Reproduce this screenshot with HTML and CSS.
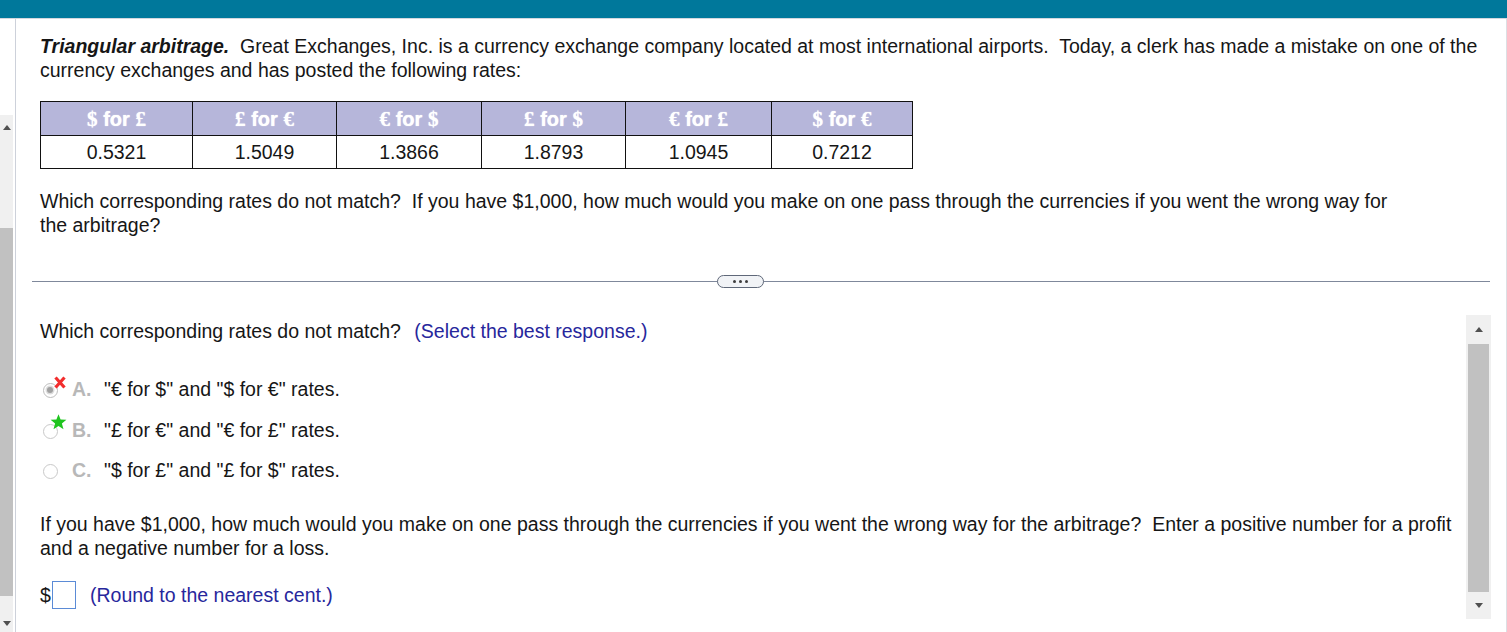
FILE: index.html
```html
<!DOCTYPE html>
<html lang="en">
<head>
<meta charset="utf-8">
<title>Triangular arbitrage</title>
<link rel="stylesheet" href="styles.css">
</head>
<body>
<div class="topbar"></div>
<div class="frame">
  <div class="lgutter">
    <div class="track ltrack">
      <div class="arrowbox"><span class="tri up"></span></div>
      <div class="thumb lthumb"></div>
      <div class="arrowbox ldown"><span class="tri down"></span></div>
    </div>
  </div>
  <div class="main">
    <div class="stem">
      <p class="intro"><span class="title">Triangular arbitrage.</span>&nbsp; Great Exchanges, Inc. is a currency exchange company located at most international airports.&nbsp; Today, a clerk has made a mistake on one of the currency exchanges and has posted the following rates:</p>
      <table class="rates">
        <colgroup>
          <col class="c1"><col class="c2"><col class="c3"><col class="c4"><col class="c5"><col class="c6">
        </colgroup>
        <thead>
          <tr>
            <th><span class="sym">$</span> for <span class="sym">£</span></th>
            <th><span class="sym">£</span> for <span class="sym">€</span></th>
            <th><span class="sym">€</span> for <span class="sym">$</span></th>
            <th><span class="sym">£</span> for <span class="sym">$</span></th>
            <th><span class="sym">€</span> for <span class="sym">£</span></th>
            <th><span class="sym">$</span> for <span class="sym">€</span></th>
          </tr>
        </thead>
        <tbody>
          <tr><td>0.5321</td><td>1.5049</td><td>1.3866</td><td>1.8793</td><td>1.0945</td><td>0.7212</td></tr>
        </tbody>
      </table>
      <p class="question">Which corresponding rates do not match?&nbsp; If you have $1,000, how much would you make on one pass through the currencies if you went the wrong way for the arbitrage?</p>
    </div>
    <div class="divider"><span class="pill"><i></i><i></i><i></i></span></div>
    <div class="lower">
      <div class="answers">
        <p class="prompt">Which corresponding rates do not match? <span class="hint">(Select the best response.)</span></p>
        <ul class="options">
          <li class="opt">
            <span class="radio checked"><span class="mark cross"><svg width="12" height="13" viewBox="0 0 12 13"><path d="M1.5 1.5 L10.5 11.5 M10.5 1.5 L1.5 11.5" stroke="#f22d2d" stroke-width="3.2" stroke-linecap="butt" fill="none"/></svg></span></span>
            <span class="letter">A.</span>
            <span class="otext">"€ for $" and "$ for €" rates.</span>
          </li>
          <li class="opt">
            <span class="radio"><span class="mark star"><svg width="17" height="16" viewBox="0 0 17 16"><path d="M8.5 0.3 L10.6 5.6 L16.4 5.8 L11.9 9.4 L13.5 15.2 L8.5 11.9 L3.5 15.2 L5.1 9.4 L0.6 5.8 L6.4 5.6 Z" fill="#1fc41f"/></svg></span></span>
            <span class="letter">B.</span>
            <span class="otext">"£ for €" and "€ for £" rates.</span>
          </li>
          <li class="opt">
            <span class="radio"></span>
            <span class="letter">C.</span>
            <span class="otext">"$ for £" and "£ for $" rates.</span>
          </li>
        </ul>
        <p class="para">If you have $1,000, how much would you make on one pass through the currencies if you went the wrong way for the arbitrage?&nbsp; Enter a positive number for a profit and a negative number for a loss.</p>
        <div class="entry">
          <span class="dollar">$</span><span class="inputbox"></span>
          <span class="hint round">(Round to the nearest cent.)</span>
        </div>
      </div>
      <div class="track rtrack">
        <div class="arrowbox rup"><span class="tri up"></span></div>
        <div class="thumb rthumb"></div>
        <div class="arrowbox rdown"><span class="tri down"></span></div>
      </div>
    </div>
  </div>
  <div class="redge"></div>
</div>
</body>
</html>
```

FILE: styles.css
```css
* { box-sizing: border-box; }
html, body { margin: 0; padding: 0; }
body {
  width: 1507px;
  height: 632px;
  overflow: hidden;
  background: #ffffff;
  font-family: "Liberation Sans", Arial, sans-serif;
  font-size: 19.5px;
  line-height: 24px;
  color: #161616;
}
p { margin: 0; }

.topbar {
  height: 19px;
  background: #00789b;
  border-bottom: 1px solid #d3d7de;
}

.frame {
  display: flex;
  height: 613px;
}

/* left gutter with cropped scrollbar */
.lgutter {
  width: 16px;
  flex: none;
  border-right: 1px solid #cdd1da;
  display: flex;
  flex-direction: column;
}
.track {
  background: #f0f0f0;
  display: flex;
  flex-direction: column;
  align-items: center;
}
.ltrack {
  width: 13px;
  margin-top: 96px;
  flex: 1;
}
.arrowbox {
  height: 24px;
  width: 100%;
  display: flex;
  align-items: center;
  justify-content: center;
  flex: none;
}
.tri {
  width: 0;
  height: 0;
  border-left: 4.5px solid transparent;
  border-right: 4.5px solid transparent;
}
.tri.up { border-bottom: 5px solid #505050; }
.tri.down { border-top: 5px solid #505050; }
.thumb { background: #c1c1c1; flex: none; }
.lthumb {
  width: 13px;
  height: 368px;
  margin-top: 89px;
  align-self: flex-start;
}
.ldown { margin-top: 15px; }

/* main column */
.main {
  width: 1475px;
  flex: none;
  display: flex;
  flex-direction: column;
}
.stem { padding: 15px 0 0 24px; }
.title { font-weight: bold; font-style: italic; }

.rates {
  border-collapse: collapse;
  margin-top: 19px;
  table-layout: fixed;
  width: 872px;
}
.c1 { width: 152px; }
.c2 { width: 144px; }
.c3 { width: 145px; }
.c4 { width: 144px; }
.c5 { width: 146px; }
.c6 { width: 141px; }
.rates th, .rates td {
  border: 1px solid #111111;
  text-align: center;
  padding: 0;
}
.rates th {
  height: 34px;
  background: #b6b6da;
  color: #ffffff;
  font-weight: bold;
  font-size: 20px;
  text-shadow: 0 0 1px #ffffff;
}
.rates th .sym { font-family: "Liberation Serif", "Times New Roman", serif; font-size: 21px; }
.rates td {
  height: 33px;
  font-size: 19.5px;
}

.question {
  margin-top: 20px;
  max-width: 1365px;
}

.divider {
  margin: 38px 0 0 16px;
  width: 1458px;
  height: 13px;
  display: flex;
  align-items: center;
  justify-content: center;
  background: linear-gradient(#7f889b, #7f889b) 0 6px / 100% 1px no-repeat;
}
.pill {
  width: 47px;
  height: 13px;
  border: 1px solid #5f6879;
  border-radius: 7px;
  background: #f1f3f6;
  display: flex;
  align-items: center;
  justify-content: center;
  gap: 3px;
  margin-right: 42px;
}
.pill i {
  width: 3px;
  height: 3px;
  border-radius: 50%;
  background: #3d3d3d;
}

/* lower answer panel */
.lower {
  display: flex;
  flex: 1;
}
.answers {
  flex: 1;
  padding: 31px 10px 0 24px;
}
.hint { color: #27279c; margin-left: 8px; }

.options {
  list-style: none;
  margin: 34px 0 0 0;
  padding: 0;
  display: flex;
  flex-direction: column;
  gap: 16.5px;
}
.opt {
  display: flex;
  align-items: center;
  height: 24px;
  position: relative;
}
.radio {
  width: 15px;
  height: 15px;
  border: 1.5px solid #c9c9c9;
  border-radius: 50%;
  margin: 3px 0 0 3px;
  flex: none;
  position: relative;
  background: #ffffff;
}
.radio.checked {
  border-color: #bdbdbd;
}
.radio.checked::after {
  content: "";
  position: absolute;
  left: 3px;
  top: 3px;
  width: 6px;
  height: 6px;
  border-radius: 50%;
  background: #a0a0a0;
  box-shadow: 0 0 0 1.5px #dcdcdc;
}
.mark { position: absolute; line-height: 0; }
.cross { left: 10px; top: -8px; }
.star { left: 6px; top: -11px; }
.letter {
  color: #b8b8b8;
  font-weight: bold;
  margin-left: 14px;
  width: 32px;
  flex: none;
}
.para { margin-top: 30px; }

.entry {
  display: flex;
  align-items: center;
  margin-top: 21px;
  height: 28px;
}
.dollar { width: 12px; }
.inputbox {
  width: 24px;
  height: 28px;
  border: 1px solid #5b8bd6;
  background: #ffffff;
}
.round { margin-left: 14px; }

.rtrack {
  width: 25px;
  height: 304px;
  margin-top: 27px;
  flex: none;
}
.rup { height: 29px; }
.rthumb {
  width: 21px;
  height: 248px;
}
.rdown { height: 27px; }

.redge {
  width: 16px;
  flex: none;
  border-right: 1px solid #dcdfe4;
}
```
